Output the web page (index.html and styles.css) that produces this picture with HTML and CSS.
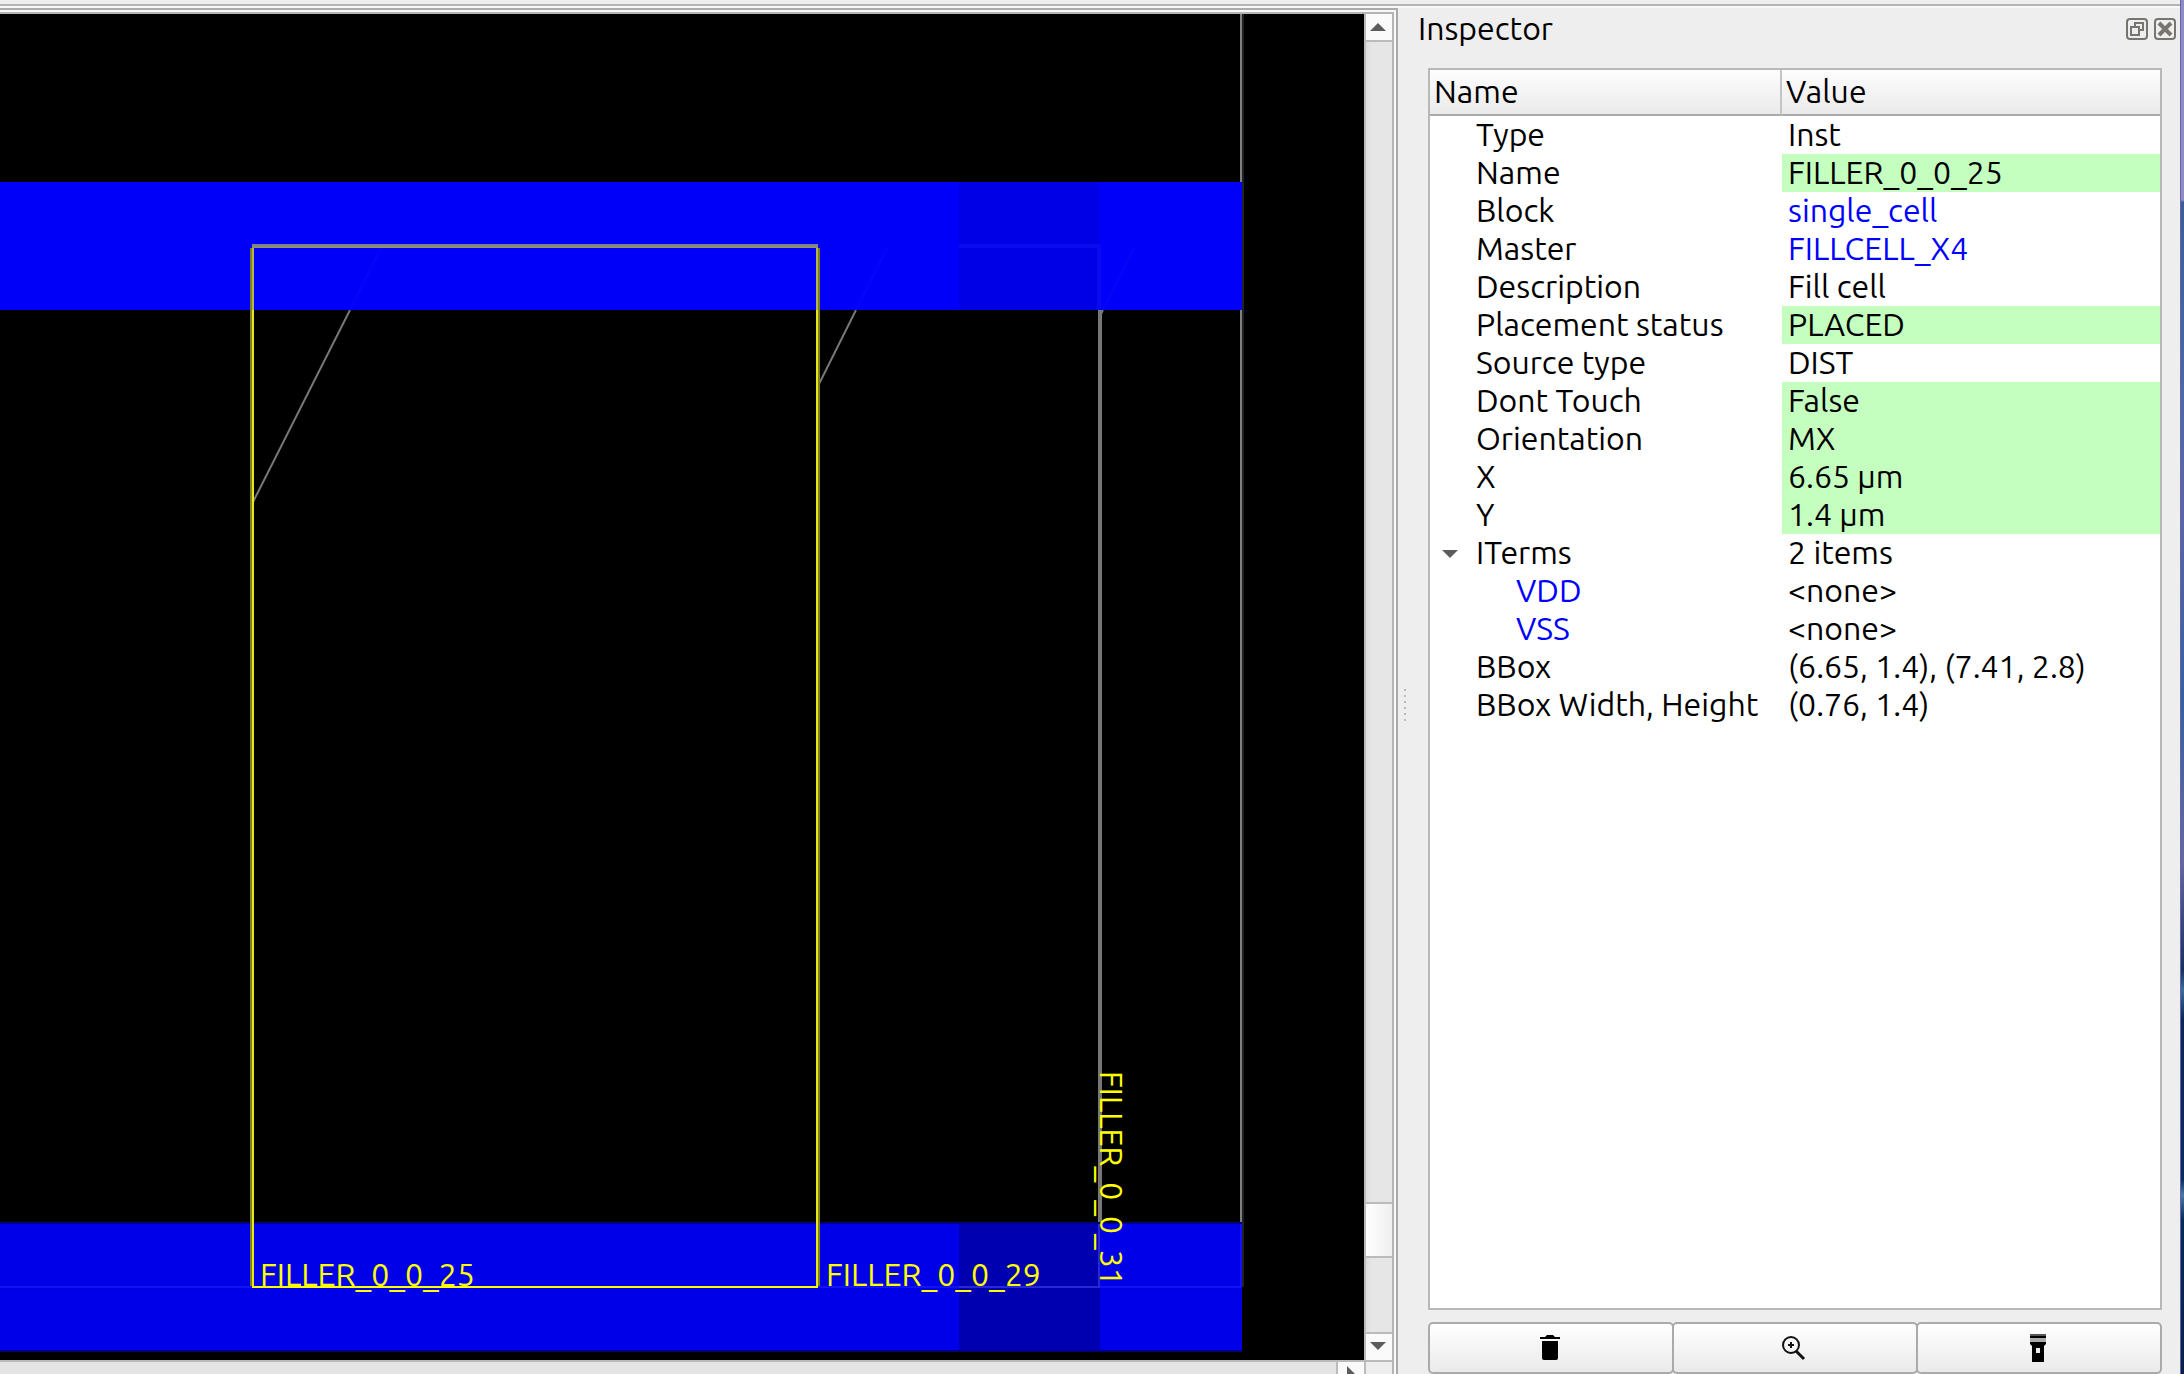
FILE: index.html
```html
<!DOCTYPE html>
<html lang="en">
<head>
<meta charset="utf-8">
<title>Layout viewer - Inspector</title>
<link rel="stylesheet" href="styles.css">
</head>
<body>
<div class="desktop">
  <div class="window">
    <div class="toolbar-edge"></div>
    <div class="workspace">
      <main class="viewer">
        <div class="viewer-frame">
          <svg class="layout" role="img" aria-label="Cell layout">
            <!-- die edge and placement rows -->
            <g class="outline">
              <path d="M1241 0V1273"/>
              <path d="M1100 296V1273" class="row-edge"/>
              <path d="M350 296L252 490M856 296L818 372M1103 296L1099 304" class="thin"/>
            </g>
            <path d="M1243 0V1273" class="outline-shade"/>

            <!-- power rails -->
            <rect class="rail-top" x="0" y="168" width="1242" height="128"/>
            <rect class="rail-top-dark" x="959" y="168" width="140" height="128"/>
            <rect class="rail-edge" x="0" y="1208" width="1242" height="130"/>
            <rect class="rail-bottom" x="0" y="1210" width="1242" height="126"/>
            <rect class="rail-bottom-dark" x="959" y="1210" width="141" height="126"/>
            <g class="rail-lines">
              <path d="M0 1273H959M1100 1273H1241V1210" class="faint"/>
              <path d="M959 1273H1099V1210"/>
              <path d="M959 232H1099V296" class="fainter wide"/>
              <path d="M1134 234L1103 296M381 234L350 296M887 234L856 296" class="hair"/>
            </g>

            <!-- selected instance -->
            <g class="selection">
              <path d="M251 234V1272M819 234V1272" class="glow"/>
              <path d="M252 232H818" class="cap"/>
              <path d="M252 233H818" class="cap-low"/>
              <path d="M253 236V1272M817 236V1272" class="side"/>
              <path d="M252 1273H818"/>
              <path d="M253 234V296M817 234V296" class="dim"/>
            </g>

            <g class="labels">
              <text x="260" y="1272">FILLER_0_0_25</text>
              <text x="826" y="1272">FILLER_0_0_29</text>
              <text transform="translate(1100 1057) rotate(90)">FILLER_0_0_31</text>
            </g>
          </svg>

          <div class="vscroll">
            <button class="step up" aria-label="Scroll up"><svg width="16" height="8"><path d="M0 8L8 0L16 8Z"/></svg></button>
            <div class="track"><div class="thumb"></div></div>
            <button class="step down" aria-label="Scroll down"><svg width="16" height="8"><path d="M0 0L8 8L16 0Z"/></svg></button>
          </div>
          <div class="hscroll">
            <div class="htrack"></div>
            <button class="step right" aria-label="Scroll right"><svg width="8" height="16"><path d="M0 0L8 8L0 16Z"/></svg></button>
          </div>
          <div class="corner"></div>
        </div>
      </main>

      <div class="splitter"><i></i><i></i><i></i><i></i><i></i><i></i></div>

      <aside class="dock">
        <header class="dock-title">
          <h1>Inspector</h1>
          <button class="dock-button" aria-label="Float">
            <svg width="22" height="22" viewBox="0 0 22 22"><rect x="1" y="1" width="20" height="20" rx="3"/><path d="M5 9H13V17H5ZM9 9V5H17V12H13"/></svg>
          </button>
          <button class="dock-button" aria-label="Close">
            <svg width="22" height="22" viewBox="0 0 22 22"><rect x="1" y="1" width="20" height="20" rx="3"/><path class="cross" d="M5 5L17 17M17 5L5 17"/></svg>
          </button>
        </header>

        <div class="tree">
          <table>
            <thead><tr><th>Name</th><th>Value</th></tr></thead>
            <tbody>
              <tr><td>Type</td><td>Inst</td></tr>
              <tr><td>Name</td><td class="editable">FILLER_0_0_25</td></tr>
              <tr><td>Block</td><td><a href="#block">single_cell</a></td></tr>
              <tr><td>Master</td><td><a href="#master">FILLCELL_X4</a></td></tr>
              <tr><td>Description</td><td>Fill cell</td></tr>
              <tr><td>Placement status</td><td class="editable">PLACED</td></tr>
              <tr><td>Source type</td><td>DIST</td></tr>
              <tr><td>Dont Touch</td><td class="editable">False</td></tr>
              <tr><td>Orientation</td><td class="editable">MX</td></tr>
              <tr><td>X</td><td class="editable">6.65 μm</td></tr>
              <tr><td>Y</td><td class="editable">1.4 μm</td></tr>
              <tr><td class="branch"><button class="expander" aria-label="Collapse ITerms"><svg width="16" height="8"><path d="M0 0L8 8L16 0Z"/></svg></button>ITerms</td><td>2 items</td></tr>
              <tr><td class="child"><a href="#vdd">VDD</a></td><td>&lt;none&gt;</td></tr>
              <tr><td class="child"><a href="#vss">VSS</a></td><td>&lt;none&gt;</td></tr>
              <tr><td>BBox</td><td>(6.65, 1.4), (7.41, 2.8)</td></tr>
              <tr><td>BBox Width, Height</td><td>(0.76, 1.4)</td></tr>
            </tbody>
          </table>
        </div>

        <div class="actions">
          <button aria-label="Delete">
            <svg width="20" height="28" viewBox="0 0 20 28"><path d="M0 3H5L7 1H13L15 3H20V5H0Z"/><path d="M2 7H18V24Q18 26 16 26H4Q2 26 2 24Z"/></svg>
          </button>
          <button aria-label="Zoom to">
            <svg width="24" height="28" viewBox="0 0 24 28"><g class="stroke"><circle cx="9" cy="11" r="8"/><path d="M14 17L22 25" stroke-width="3"/><path d="M9 8V14M6 11H12" stroke-width="2"/></g></svg>
          </button>
          <button aria-label="Highlight">
            <svg width="16" height="28" viewBox="0 0 16 28"><path fill="#555" d="M0 0H16V2H0Z"/><path d="M0 2H16V4H0Z"/><path fill="#aaa" d="M0 4H16V8H0Z"/><path d="M0 8H16V10L14 12V28H2V12L0 10Z"/><rect x="6" y="14" width="4" height="5" fill="#eee"/></svg>
          </button>
        </div>
      </aside>
    </div>
  </div>
  <div class="wallpaper"></div>
</div>
</body>
</html>
```
FILE: styles.css
```css
* { box-sizing: border-box; }

body {
  margin: 0;
  overflow: hidden;
  color: #000;
  font: 32px/36px "Ubuntu", "Open Sans", "Noto Sans", sans-serif;
}

button {
  padding: 0;
  border: 0;
  background: none;
}

svg { display: block; }

a {
  color: #00f;
  text-decoration: none;
}

.desktop {
  display: flex;
  height: 100vh;
}

.wallpaper {
  width: 4px;
  background: linear-gradient(#8d8cc9 0 200px, #3a5d98 202px, #4a69a6 400px, #5a66a8 500px, #35609c 700px, #6468a4 860px, #16305f 970px, #3d6a9c 990px, #0a2558 1020px, #0a2a62 1180px, #4a78a8 1195px, #06295a 1220px, #062048);
  border-left: 1px solid #6464a0;
}

.window {
  flex: 1;
  min-width: 0;
  display: flex;
  flex-direction: column;
  background: #eee;
}

.toolbar-edge {
  height: 8px;
  border-top: 4px solid #eee;
  border-bottom: 2px solid #f8f8f8;
  background: #b4b4b4;
}

.workspace {
  flex: 1;
  min-height: 0;
  display: flex;
}

/* Layout canvas */
.viewer {
  flex: 1;
  min-width: 0;
  display: flex;
  border: solid #aaa;
  border-width: 2px 2px 0 0;
  padding: 2px 2px 0 0;
  background: #f8f8f8;
}

.viewer-frame {
  flex: 1;
  min-width: 0;
  display: grid;
  grid-template: minmax(0, 1fr) 14px / minmax(0, 1fr) 28px;
  border: solid #b4b4b4;
  border-width: 2px 2px 0 0;
}

.layout {
  width: 100%;
  height: 100%;
  background: #000;
}

.layout path {
  fill: none;
  stroke-width: 2;
}

.outline { stroke: #808080; }
.outline-shade { stroke: #222; }
.layout .wide { stroke-width: 4; }
.layout .row-edge { stroke-width: 4; stroke: #777; }
.layout .thin { stroke: #777; }

.rail-top { fill: #0000fa; }
.rail-top-dark { fill: #0000e6; }
.rail-edge { fill: #000080; }
.rail-bottom { fill: #0000e8; }
.rail-bottom-dark { fill: #0000b0; }
.rail-lines { stroke: #2828d8; }
.rail-lines .faint { stroke: #1212f4; }
.rail-lines .fainter { stroke: #0a0af0; }
.rail-lines .hair { stroke: #0606f6; }

.selection { stroke: #ff0; }
.selection .glow { stroke: #80801c; }
.selection .side { stroke: #e6e61c; }
.selection .dim { stroke: #b4b450; }
.layout .cap { stroke: #808090; stroke-width: 4; }
.layout .cap-low { stroke: #909070; }

.labels {
  fill: #ff0;
  font-size: 32px;
}

/* Scroll bars */
.vscroll {
  display: flex;
  flex-direction: column;
  border-left: 2px solid #bbb;
}

.step {
  display: flex;
  align-items: center;
  justify-content: center;
  background: #fafafa;
}

.step path,
.expander path { fill: #5c5c5c; }

.up {
  height: 28px;
  padding-right: 2px;
  border-bottom: 2px solid #bbb;
}

.down {
  height: 28px;
  padding: 0 2px 2px 0;
  border-top: 2px solid #bbb;
}

.track {
  flex: 1;
  display: flex;
  flex-direction: column;
  justify-content: flex-end;
  padding-bottom: 74px;
  background: linear-gradient(90deg, #dedede, #e6e6e6 6px);
}

.thumb {
  height: 56px;
  border: solid #bbb;
  border-width: 2px 0;
  background: linear-gradient(90deg, #fff, #efefef);
}

.hscroll {
  display: flex;
  overflow: hidden;
  border-top: 2px solid #bbb;
}

.htrack {
  flex: 1;
  background: #e4e4e4;
}

.right {
  width: 28px;
  align-items: flex-start;
  padding-top: 4px;
  border-left: 2px solid #bbb;
}

.corner {
  border: solid #bbb;
  border-width: 2px 0 0 2px;
  background: #eee;
}

.splitter {
  width: 14px;
  display: flex;
  flex-direction: column;
  align-items: center;
  justify-content: center;
  gap: 4px;
  padding-top: 28px;
}

.splitter i {
  width: 2px;
  height: 2px;
  background: #bbb;
}

/* Inspector dock */
.dock {
  width: 768px;
  display: flex;
  flex-direction: column;
  padding: 0 18px 0 16px;
}

.dock-title {
  display: flex;
  align-items: center;
  gap: 6px;
  height: 42px;
  margin: 0 -14px 18px -10px;
}

.dock-title h1 {
  flex: 1;
  margin: 0;
  padding-bottom: 2px;
  font-size: 32px;
  font-weight: 400;
}

.dock-button svg {
  fill: none;
  stroke: #77756f;
  stroke-width: 2;
}

.dock-button .cross { stroke-width: 4; }

.tree {
  flex: 1;
  min-height: 0;
  border: 2px solid #b8b8b8;
  background: #fff;
}

table {
  width: 100%;
  table-layout: fixed;
  border-collapse: separate;
  border-spacing: 0;
}

th {
  height: 46px;
  padding: 0 4px 2px;
  border-bottom: 2px solid #aaa;
  background: linear-gradient(#fdfdfd, #f4f4f4 50%, #eaeaea);
  font-weight: 400;
  text-align: left;
}

th:first-child {
  width: 352px;
  border-right: 2px solid #c4c4c4;
}

td {
  height: 38px;
  padding: 0 0 2px 6px;
  white-space: nowrap;
}

td:first-child { padding-left: 46px; }
td.child:first-child { padding-left: 86px; }
td.branch:first-child { padding-left: 12px; }
.editable { background: #c4ffc0; }

.expander {
  width: 34px;
  height: 12px;
  vertical-align: middle;
}

.expander svg { margin-bottom: 4px; }

.actions {
  display: flex;
  height: 52px;
  margin-top: 12px;
}

.actions button {
  flex: 1;
  display: flex;
  justify-content: center;
  padding: 10px 2px 0 0;
  border: 2px solid #aaa;
  border-radius: 5px;
  background: linear-gradient(#fff, #eaeaea);
}

.actions button + button { margin-left: -2px; }

.actions .stroke {
  fill: none;
  stroke: #111;
  stroke-width: 2;
}
```
